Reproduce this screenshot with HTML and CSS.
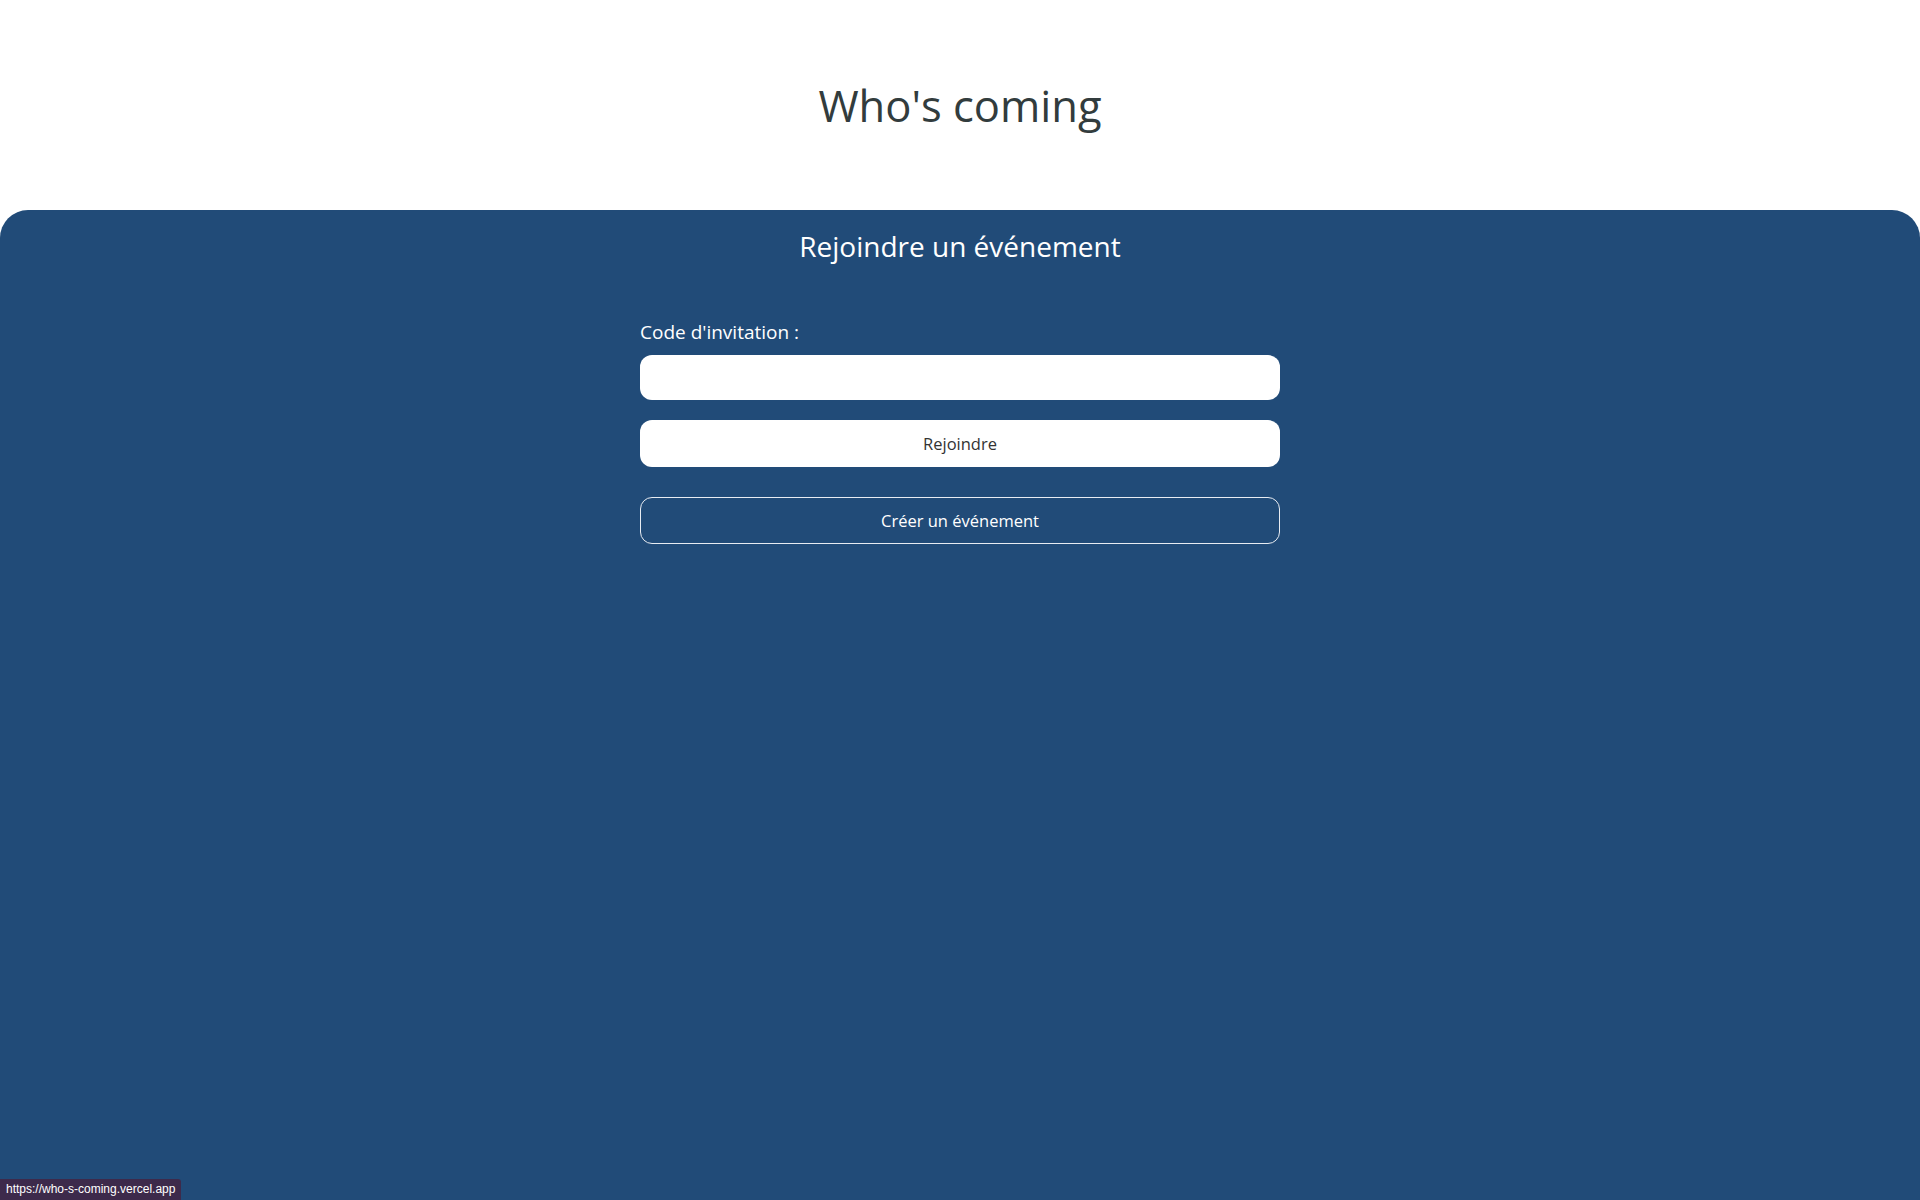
FILE: index.html
```html
<!DOCTYPE html>
<html lang="fr">
<head>
<meta charset="utf-8">
<title>Who's coming</title>
<link rel="stylesheet" href="styles.css">
</head>
<body>
<header class="top">
  <h1 class="title">Who's coming</h1>
</header>
<main class="panel">
  <h2 class="panel-title">Rejoindre un événement</h2>
  <form class="join-form">
    <label class="label" for="code">Code d'invitation :</label>
    <input class="code-input" id="code" type="text">
    <button class="btn btn-primary" type="button">Rejoindre</button>
    <button class="btn btn-outline" type="button">Créer un événement</button>
  </form>
</main>
<div class="status">https://who-s-coming.vercel.app</div>
</body>
</html>
```

FILE: styles.css
```css
html, body {
  margin: 0;
  padding: 0;
  height: 100%;
}
body {
  font-family: "Open Sans", "Noto Sans", "Liberation Sans", sans-serif;
  background: #ffffff;
  display: flex;
  flex-direction: column;
  min-height: 100vh;
}
.top {
  height: 210px;
  display: flex;
  justify-content: center;
  align-items: flex-start;
}
.title {
  margin: 80px 0 0;
  font-size: 43.5px;
  font-weight: 400;
  line-height: 1.2;
  color: #323c3d;
}
.panel {
  flex: 1;
  background: #214b78;
  border-radius: 28px 28px 0 0;
  display: flex;
  flex-direction: column;
  align-items: center;
  color: #ffffff;
}
.panel-title {
  margin: 18px 0 0;
  font-size: 28px;
  font-weight: 400;
  line-height: 1.3;
}
.join-form {
  width: 640px;
  margin-top: 56px;
  display: flex;
  flex-direction: column;
}
.label {
  font-size: 19px;
  line-height: 24px;
  margin-bottom: 11px;
}
.code-input {
  height: 45px;
  box-sizing: border-box;
  border: none;
  border-radius: 12px;
  background: #ffffff;
  padding: 0 14px;
  font: inherit;
  font-size: 16px;
  outline: none;
}
.btn {
  box-sizing: border-box;
  font-family: inherit;
  font-size: 16.5px;
  border-radius: 12px;
  cursor: pointer;
}
.btn-primary {
  margin-top: 20px;
  height: 47px;
  border: none;
  background: #ffffff;
  color: #333333;
}
.btn-outline {
  margin-top: 30px;
  height: 47px;
  border: 1px solid #e8ecf2;
  background: transparent;
  color: #ffffff;
}
.status {
  position: fixed;
  left: 0;
  bottom: 0;
  height: 21px;
  padding: 0 6px;
  background: #3d2a4b;
  color: #ffffff;
  font-family: "Liberation Sans", sans-serif;
  font-size: 12px;
  line-height: 21px;
  border-top-right-radius: 3px;
}
```
